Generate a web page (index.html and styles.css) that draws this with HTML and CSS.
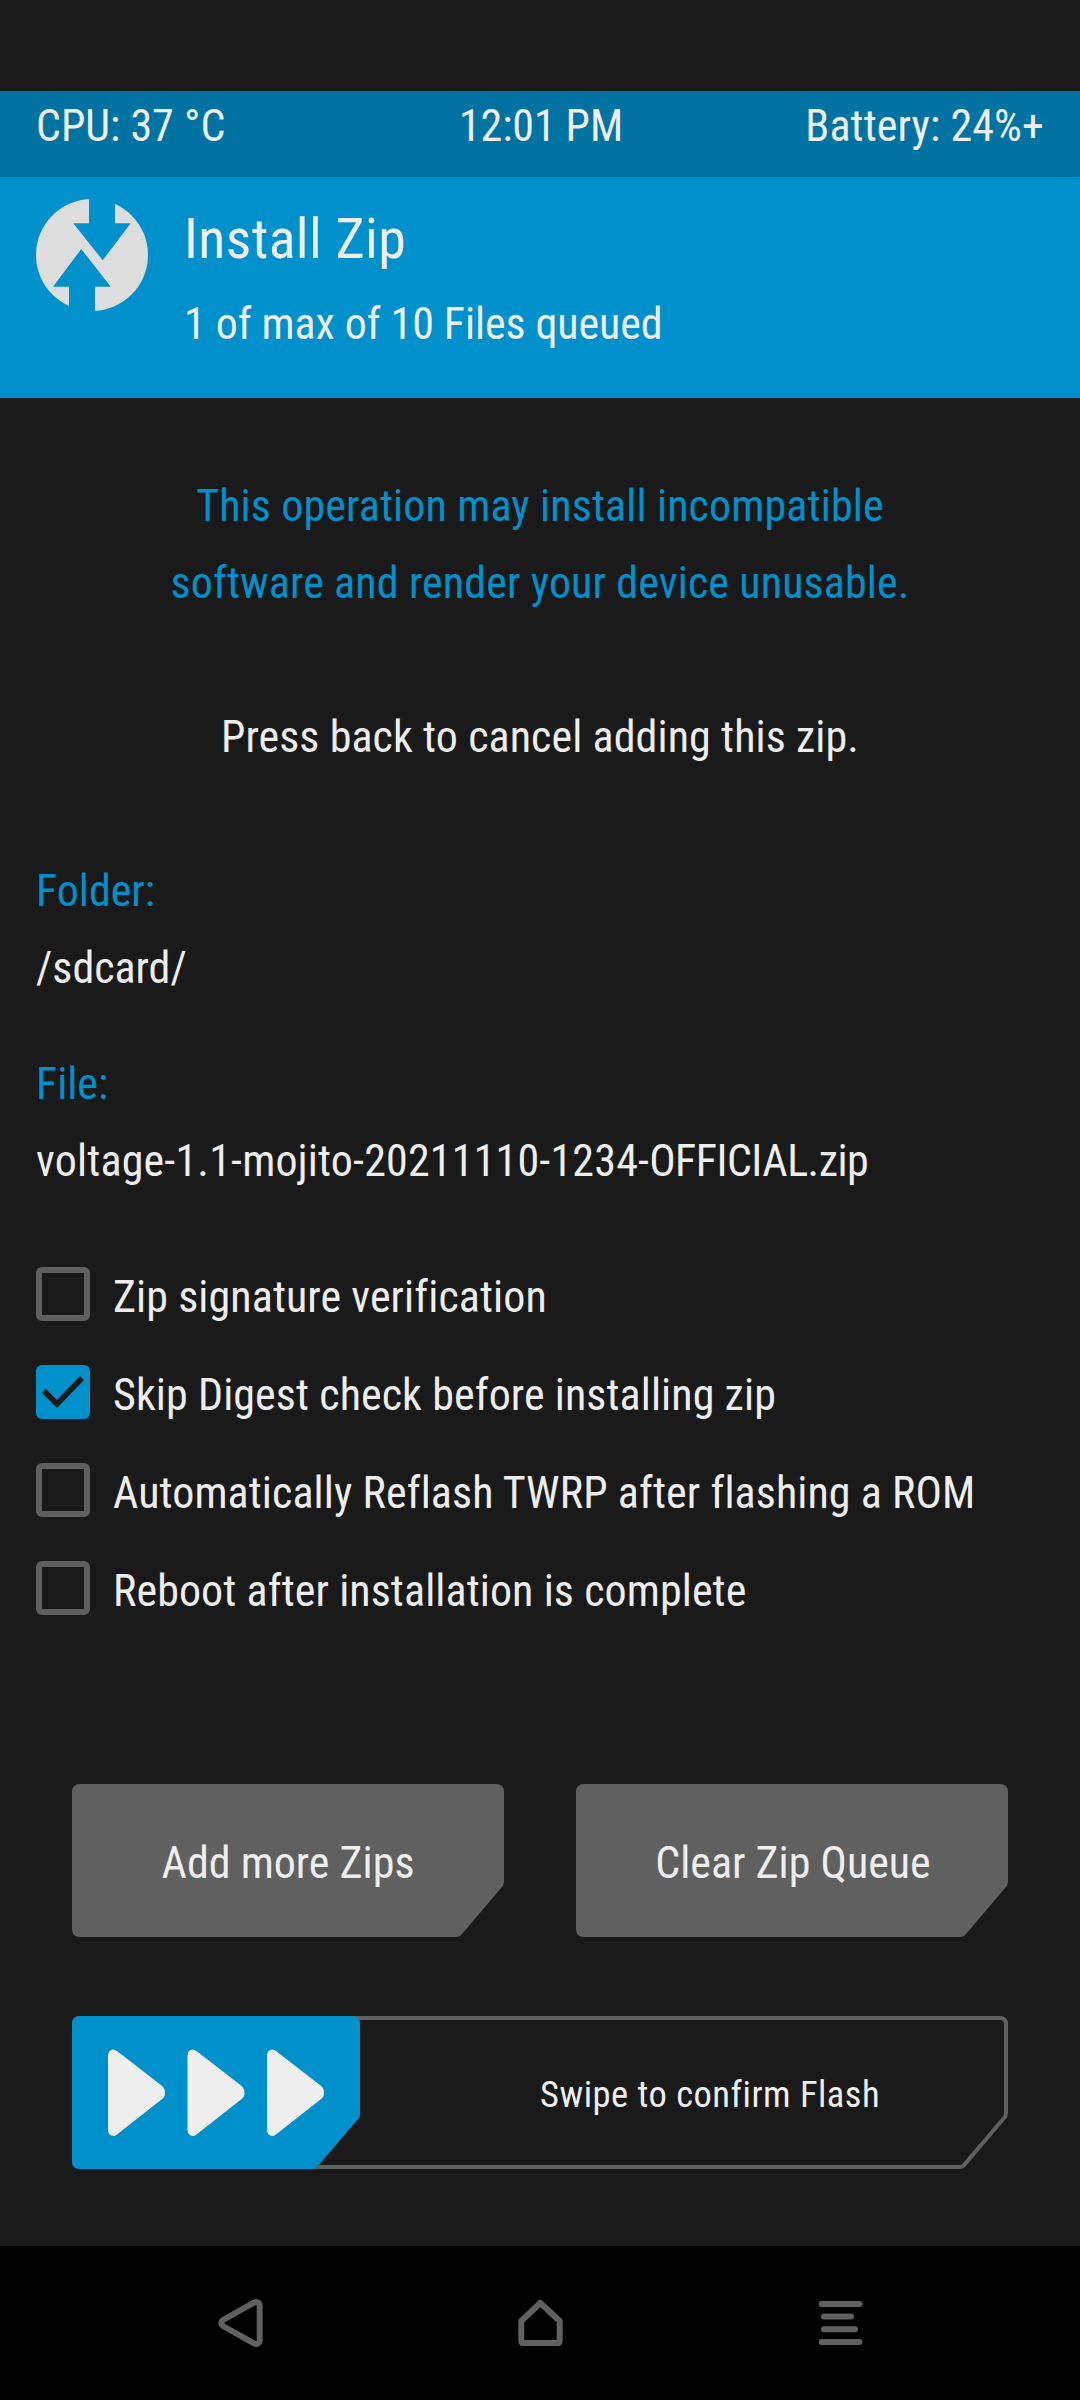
FILE: index.html
```html
<!DOCTYPE html>
<html lang="en">
<head>
<meta charset="utf-8">
<title>Install Zip</title>
<link rel="stylesheet" href="styles.css">
</head>
<body>
<div class="screen">
  <div class="status">
    <span>CPU: 37 °C</span>
    <span class="status-time">12:01 PM</span>
    <span class="status-battery">Battery: 24%+</span>
  </div>
  <header class="header">
    <svg class="logo" viewBox="0 0 112 112">
      <circle cx="56" cy="56" r="56" fill="#ddd"/>
      <path fill="#0090cb" d="M53 -1H79V24.3H94.7L66.7 61.3L37.3 24.3H53ZM59 113H33V87.7H17L45.3 50L74.7 87.7H59Z"/>
    </svg>
    <div class="heading">
      <h1 class="title">Install Zip</h1>
      <p class="subtitle">1 of max of 10 Files queued</p>
    </div>
  </header>
  <main class="content">
    <p class="line center accent warning">This operation may install incompatible<br>software and render your device unusable.</p>
    <p class="line center cancel">Press back to cancel adding this zip.</p>
    <dl class="info">
      <dt class="line accent">Folder:</dt>
      <dd class="line">/sdcard/</dd>
    </dl>
    <dl class="info info-file">
      <dt class="line accent">File:</dt>
      <dd class="line"><span class="file-name">voltage-1.1-mojito-20211110-1234-</span><span class="file-tag">OFFICIAL.zip</span></dd>
    </dl>
    <div class="options">
      <label class="option"><span class="box"></span><span class="option-text">Zip signature verification</span></label>
      <label class="option"><span class="box box-on"><svg viewBox="0 0 54 54"><path d="M8 26L21 39L46 13" fill="none" stroke="#1a1a1a" stroke-width="5.5"/></svg></span><span class="option-text">Skip Digest check before installing zip</span></label>
      <label class="option"><span class="box"></span><span class="option-text">Automatically Reflash TWRP after flashing a ROM</span></label>
      <label class="option"><span class="box"></span><span class="option-text">Reboot after installation is complete</span></label>
    </div>
    <div class="buttons">
      <div class="button">
        <svg class="shape" viewBox="0 0 432 153"><path fill="#606060" d="M8 0H424Q432 0 432 8V98Q432 101 430 103L390 150Q388 153 384 153H8Q0 153 0 145V8Q0 0 8 0Z"/></svg>
        <span class="button-text">Add more Zips</span>
      </div>
      <div class="button">
        <svg class="shape" viewBox="0 0 432 153"><path fill="#606060" d="M8 0H424Q432 0 432 8V98Q432 101 430 103L390 150Q388 153 384 153H8Q0 153 0 145V8Q0 0 8 0Z"/></svg>
        <span class="button-text button-text-clear">Clear Zip Queue</span>
      </div>
    </div>
    <div class="slider">
      <svg class="shape" viewBox="0 0 936 153">
        <path fill="none" stroke="#606060" stroke-width="4" d="M8 2H928Q934 2 934 8V97Q934 100 932 102L893 148Q891 151 888 151H8Q2 151 2 145V8Q2 2 8 2Z"/>
        <path fill="#0090cb" d="M8 0H280Q288 0 288 8V98Q288 101 286 103L246 150Q244 153 240 153H8Q0 153 0 145V8Q0 0 8 0Z"/>
        <g fill="#eee">
          <path id="chevron" d="M36 40Q36 33.500 41.500 33.500Q43 33.500 45 35L89.500 69.500Q93 72 93 77Q93 81 89.500 83.500L45 118.500Q43 120 41.500 120Q36 120 36 113.500Z"/>
          <use href="#chevron" x="79.500"/>
          <use href="#chevron" x="159"/>
        </g>
      </svg>
      <span class="slider-text">Swipe to confirm Flash</span>
    </div>
  </main>
  <nav class="nav">
    <svg class="nav-icon" viewBox="0 0 60 60"><path fill="none" stroke="#606060" stroke-width="6" stroke-linejoin="round" d="M43.500 9.900Q45.500 8.500 47.500 9.300Q49.700 10.300 49.700 13V47Q49.700 49.700 47.500 50.700Q45.500 51.500 43.500 50.100L13 33Q9.500 30 13 27Z"/></svg>
    <svg class="nav-icon" viewBox="0 0 60 60"><path fill="none" stroke="#606060" stroke-width="6" stroke-linejoin="round" d="M11.300 28L30.300 10L49.700 28V48Q49.700 50 47.700 50H13.300Q11.300 50 11.300 48Z"/></svg>
    <svg class="nav-icon" viewBox="0 0 60 60"><path fill="none" stroke="#606060" stroke-width="6" stroke-linecap="round" d="M11.700 11H49.500M14 23.600H41M14 36.300H45M11.700 49H49.500"/></svg>
  </nav>
</div>
</body>
</html>
```
FILE: styles.css
```css
* { box-sizing: border-box; }
body, p, h1, dl, dd { margin: 0; }
body {
  background: #1a1a1a;
  color: #eee;
  font: 400 44px/77px "Roboto Condensed", Roboto, sans-serif;
  font-variant-ligatures: none;
}
svg { display: block; }
.screen {
  width: 1080px;
  height: 2400px;
  padding-top: 91px;
  display: flex;
  flex-direction: column;
}
.status {
  height: 86px;
  padding: 0 36px;
  background: #0073a3;
  display: grid;
  grid-template-columns: 1fr 1fr 1fr;
  line-height: 70px;
}
.status-time { padding-left: 2px; text-align: center; letter-spacing: -0.1px; }
.status-battery { text-align: right; letter-spacing: 0.1px; }
.header {
  height: 221px;
  padding: 22px 36px 0;
  background: #0090cb;
  display: flex;
  gap: 36px;
}
.logo { width: 112px; height: 112px; }
.title { font-size: 56px; font-weight: 400; line-height: 80px; letter-spacing: 0.35px; }
.subtitle { margin-top: 5px; line-height: 80px; letter-spacing: -0.09px; }
.content { flex: 1; padding: 70px 36px 0; }
.center { text-align: center; }
.accent { color: #0090cb; }
.warning { letter-spacing: 0.13px; }
.cancel { margin-top: 77px; letter-spacing: 0.08px; }
.info { margin-top: 77px; }
.info-file { margin-top: 39px; }
.file-name { letter-spacing: 0.18px; }
.file-tag { letter-spacing: -0.5px; }
.options { padding-top: 67px; }
.option { display: flex; gap: 23px; height: 98px; }
.box {
  width: 54px;
  height: 54px;
  border: 6px solid #606060;
  border-radius: 6px;
}
.box-on { border: 0; background: #0090cb; }
.option-text { line-height: 60px; letter-spacing: 0.08px; }
.buttons { display: flex; gap: 72px; padding: 125px 36px 0; }
.button, .slider { display: grid; height: 153px; }
.button > *, .slider > * { grid-area: 1 / 1; }
.button { width: 432px; text-align: center; line-height: 158px; }
.button-text-clear { padding-left: 2px; }
.shape { width: 100%; height: 153px; }
.slider { margin: 79px 36px 0; }
.slider-text { padding-left: 468px; font-size: 36.5px; line-height: 157px; letter-spacing: 0.5px; }
.nav {
  height: 154px;
  padding: 0 90px;
  background: #000;
  display: grid;
  grid-template-columns: repeat(3, 1fr);
  place-items: center;
}
.nav-icon { width: 60px; height: 60px; }
```
